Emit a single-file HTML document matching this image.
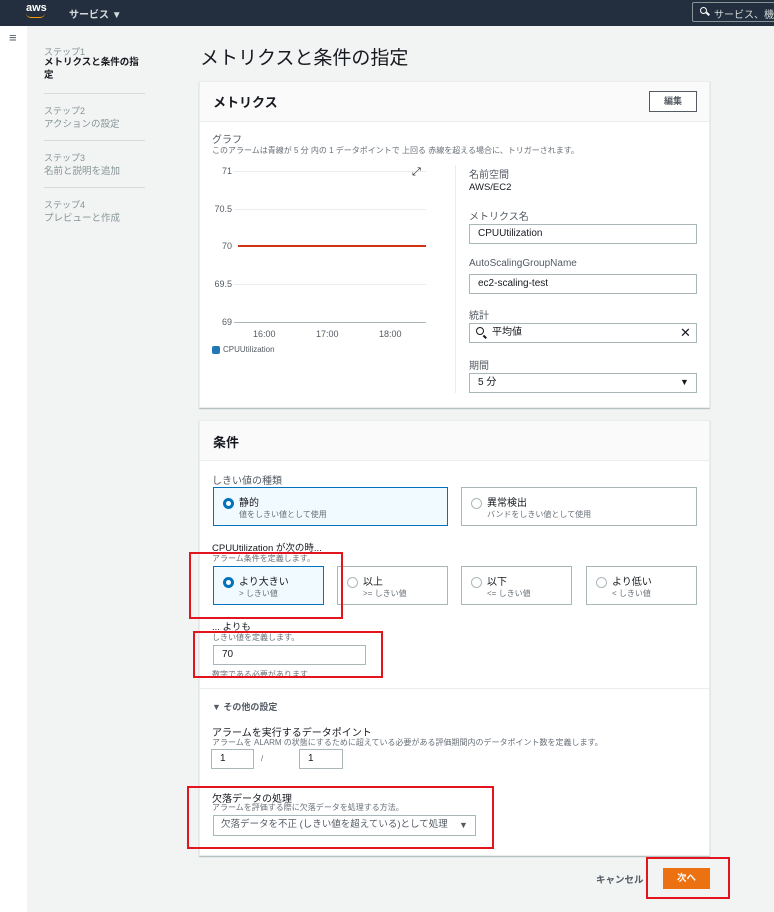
<!DOCTYPE html>
<html><head><meta charset="utf-8"><style>
*{box-sizing:border-box;margin:0;padding:0}
body{width:774px;height:912px;background:#f2f3f3;font-family:"Liberation Sans","Noto Sans CJK JP",sans-serif;color:#16191f;position:relative;overflow:hidden}
.a{position:absolute;white-space:nowrap}
.nav{left:0;top:0;width:774px;height:26px;background:#232f3e}
.lab{font-size:10px;color:#545b64}
.sub{font-size:8px;color:#687078}
.inp{position:absolute;border:1px solid #aab7b8;background:#fff;font-size:10px;padding-left:8px;line-height:17px;color:#16191f;white-space:nowrap;overflow:hidden}
.panel{position:absolute;background:#fff;box-shadow:0 1px 1px #aab7b8;border:1px solid #eaeded}
.ph{position:absolute;left:0;right:0;top:0;height:40px;background:#fafafa;border-bottom:1px solid #eaeded}
.card{position:absolute;border:1px solid #aab7b8;background:#fff}
.card.s{border-color:#0073bb;background:#f1faff}
.rad{position:absolute;left:9px;top:10px;width:11px;height:11px;border-radius:50%;border:1px solid #aab7b8;background:#fff}
.card.s .rad{border:3px solid #0073bb}
.ct{position:absolute;left:25px;top:6px;font-size:10px;color:#16191f}
.cs{position:absolute;left:25px;top:21px;font-size:8px;color:#687078}
.red{position:absolute;border:2px solid #e3141e}
.gl{position:absolute;left:234px;width:192px;height:1px;background:#eaeded}
.yl{position:absolute;width:30px;text-align:right;left:202px;font-size:9px;color:#545b64}
</style></head><body>
<div class="a nav"></div>
<div class="a" style="left:26px;top:2px;color:#fff;font-size:11px;font-weight:bold">aws</div>
<div class="a" style="left:26px;top:13px;width:19px;height:5px;border-bottom:1.5px solid #f90;border-radius:0 0 10px 10px"></div>
<div class="a" style="left:69px;top:6px;color:#d5dbdb;font-size:10px;font-weight:bold">サービス ▼</div>
<div class="a" style="left:692px;top:2px;width:90px;height:20px;border:1px solid #879596;border-radius:2px"></div>
<div class="a" style="left:700px;top:7px;width:7px;height:7px;border:1.5px solid #fff;border-radius:50%"></div>
<div class="a" style="left:706px;top:13px;width:4px;height:1.5px;background:#fff;transform:rotate(45deg)"></div>
<div class="a" style="left:714px;top:6px;color:#d5dbdb;font-size:10px">サービス、機</div>
<div class="a" style="left:0;top:26px;width:27px;height:886px;background:#fff"></div>
<div class="a" style="left:9px;top:30px;color:#545b64;font-size:13px">≡</div>

<div class="a" style="left:44px;top:45px;font-size:9px;color:#879596">ステップ1</div>
<div class="a" style="left:44px;top:56px;font-size:9.5px;font-weight:bold;line-height:13px">メトリクスと条件の指<br>定</div>
<div class="a" style="left:44px;top:93px;width:101px;height:1px;background:#d5dbdb"></div>
<div class="a" style="left:44px;top:104px;font-size:9px;color:#879596">ステップ2</div>
<div class="a" style="left:44px;top:116px;font-size:9.5px;color:#879596">アクションの設定</div>
<div class="a" style="left:44px;top:140px;width:101px;height:1px;background:#d5dbdb"></div>
<div class="a" style="left:44px;top:151px;font-size:9px;color:#879596">ステップ3</div>
<div class="a" style="left:44px;top:163px;font-size:9.5px;color:#879596">名前と説明を追加</div>
<div class="a" style="left:44px;top:187px;width:101px;height:1px;background:#d5dbdb"></div>
<div class="a" style="left:44px;top:198px;font-size:9px;color:#879596">ステップ4</div>
<div class="a" style="left:44px;top:210px;font-size:9.5px;color:#879596">プレビューと作成</div>

<div class="a" style="left:200px;top:43px;font-size:19px;color:#16191f">メトリクスと条件の指定</div>

<div class="panel" style="left:199px;top:81px;width:511px;height:327px">
<div class="ph"></div>
</div>
<div class="a" style="left:213px;top:92px;font-size:13px;font-weight:bold">メトリクス</div>
<div class="a" style="left:649px;top:91px;width:48px;height:21px;border:1px solid #545b64;background:#fff;font-size:9px;font-weight:bold;color:#545b64;text-align:center;line-height:19px">編集</div>
<div class="a lab" style="left:212px;top:131px">グラフ</div>
<div class="a sub" style="left:212px;top:145px">このアラームは青線が 5 分 内の 1 データポイントで 上回る 赤線を超える場合に、トリガーされます。</div>
<div class="yl" style="top:166px">71</div><div class="gl" style="top:171px"></div>
<div class="yl" style="top:204px">70.5</div><div class="gl" style="top:209px"></div>
<div class="yl" style="top:241px">70</div>
<div class="yl" style="top:279px">69.5</div><div class="gl" style="top:284px"></div>
<div class="yl" style="top:317px">69</div><div class="gl" style="top:322px;background:#aab7b8"></div>
<div class="a" style="left:238px;top:245px;width:188px;height:2px;background:#d13212"></div>
<div class="a" style="left:412px;top:166px;font-size:11px;color:#16191f">⤢</div>
<div class="a" style="left:253px;top:329px;font-size:9px;color:#545b64">16:00</div>
<div class="a" style="left:316px;top:329px;font-size:9px;color:#545b64">17:00</div>
<div class="a" style="left:379px;top:329px;font-size:9px;color:#545b64">18:00</div>
<div class="a" style="left:212px;top:346px;width:8px;height:8px;border-radius:2px;background:#1f77b4"></div>
<div class="a" style="left:223px;top:345px;font-size:8px;color:#545b64">CPUUtilization</div>
<div class="a" style="left:455px;top:165px;width:1px;height:228px;background:#eaeded"></div>
<div class="a lab" style="left:469px;top:166px">名前空間</div>
<div class="a" style="left:469px;top:182px;font-size:9.5px">AWS/EC2</div>
<div class="a lab" style="left:469px;top:208px">メトリクス名</div>
<div class="inp" style="left:469px;top:224px;width:228px;height:20px">CPUUtilization</div>
<div class="a lab" style="left:469px;top:258px">AutoScalingGroupName</div>
<div class="inp" style="left:469px;top:274px;width:228px;height:20px">ec2-scaling-test</div>
<div class="a lab" style="left:469px;top:307px">統計</div>
<div class="inp" style="left:469px;top:323px;width:228px;height:20px;padding-left:22px">平均値</div>
<div class="a" style="left:476px;top:327px;width:8px;height:8px;border:1.3px solid #16191f;border-radius:50%"></div>
<div class="a" style="left:483px;top:336px;width:4px;height:1.5px;background:#16191f;transform:rotate(45deg)"></div>
<div class="a" style="left:680px;top:325px;font-size:13px">✕</div>
<div class="a lab" style="left:469px;top:357px">期間</div>
<div class="inp" style="left:469px;top:373px;width:228px;height:20px">5 分</div>
<div class="a" style="left:680px;top:377px;font-size:9px">▼</div>

<div class="panel" style="left:199px;top:420px;width:511px;height:436px"><div class="ph"></div></div>
<div class="a" style="left:213px;top:432px;font-size:13px;font-weight:bold">条件</div>
<div class="a lab" style="left:212px;top:472px">しきい値の種類</div>
<div class="card s" style="left:213px;top:487px;width:235px;height:39px"><div class="rad"></div><div class="ct">静的</div><div class="cs">値をしきい値として使用</div></div>
<div class="card" style="left:461px;top:487px;width:236px;height:39px"><div class="rad"></div><div class="ct">異常検出</div><div class="cs">バンドをしきい値として使用</div></div>
<div class="a" style="left:212px;top:540px;font-size:9.5px;color:#16191f">CPUUtilization が次の時...</div>
<div class="a sub" style="left:212px;top:553px">アラーム条件を定義します。</div>
<div class="card s" style="left:213px;top:566px;width:111px;height:39px"><div class="rad"></div><div class="ct">より大きい</div><div class="cs">&gt; しきい値</div></div>
<div class="card" style="left:337px;top:566px;width:111px;height:39px"><div class="rad"></div><div class="ct">以上</div><div class="cs">&gt;= しきい値</div></div>
<div class="card" style="left:461px;top:566px;width:111px;height:39px"><div class="rad"></div><div class="ct">以下</div><div class="cs">&lt;= しきい値</div></div>
<div class="card" style="left:586px;top:566px;width:111px;height:39px"><div class="rad"></div><div class="ct">より低い</div><div class="cs">&lt; しきい値</div></div>
<div class="a" style="left:212px;top:619px;font-size:9.5px">... よりも</div>
<div class="a sub" style="left:212px;top:632px">しきい値を定義します。</div>
<div class="inp" style="left:213px;top:645px;width:153px;height:20px">70</div>
<div class="a sub" style="left:212px;top:669px">数字である必要があります</div>
<div class="a" style="left:199px;top:688px;width:511px;height:1px;background:#eaeded"></div>
<div class="a" style="left:212px;top:700px;font-size:9px;font-weight:bold;color:#545b64">▼ その他の設定</div>
<div class="a" style="left:212px;top:724px;font-size:10px;color:#16191f">アラームを実行するデータポイント</div>
<div class="a sub" style="left:212px;top:737px">アラームを ALARM の状態にするために超えている必要がある評価期間内のデータポイント数を定義します。</div>
<div class="inp" style="left:211px;top:749px;width:43px;height:20px">1</div>
<div class="a sub" style="left:261px;top:754px">/</div>
<div class="inp" style="left:299px;top:749px;width:44px;height:20px">1</div>
<div class="a" style="left:212px;top:790px;font-size:10px;color:#16191f">欠落データの処理</div>
<div class="a sub" style="left:212px;top:802px">アラームを評価する際に欠落データを処理する方法。</div>
<div class="inp" style="left:213px;top:815px;width:263px;height:21px;color:#545b64;padding-left:7px;font-size:9.5px;line-height:18px">欠落データを不正 (しきい値を超えている)として処理</div>
<div class="a" style="left:459px;top:820px;font-size:9px;color:#545b64">▼</div>

<div class="a" style="left:596px;top:872px;font-size:9.5px;font-weight:bold;color:#545b64">キャンセル</div>
<div class="a" style="left:663px;top:868px;width:47px;height:21px;background:#ec7211;color:#fff;font-size:9.5px;font-weight:bold;text-align:center;line-height:21px">次へ</div>

<div class="red" style="left:189px;top:552px;width:154px;height:67px"></div>
<div class="red" style="left:193px;top:631px;width:190px;height:47px"></div>
<div class="red" style="left:187px;top:786px;width:307px;height:63px"></div>
<div class="red" style="left:646px;top:857px;width:84px;height:42px"></div>
</body></html>
